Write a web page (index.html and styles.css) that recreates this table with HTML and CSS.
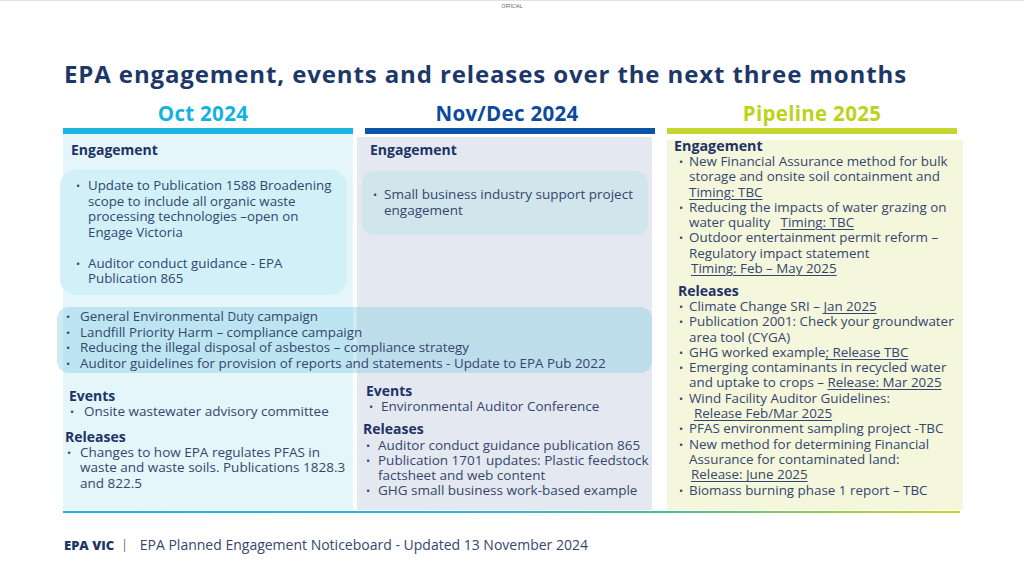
FILE: index.html
```html
<!DOCTYPE html>
<html lang="en">
<head>
<meta charset="utf-8">
<title>EPA Planned Engagement Noticeboard</title>
<link rel="stylesheet" href="styles.css">
</head>
<body>
<div class="slide">
  <div class="official">OFFICIAL</div>
  <h1 class="title">EPA engagement, events and releases over the next three months</h1>

  <div class="heads">
    <div class="head oct">Oct 2024</div>
    <div class="head nov">Nov/Dec 2024</div>
    <div class="head pipe">Pipeline 2025</div>
  </div>

  <div class="board">
    <div class="bg bg1"></div>
    <div class="bg bg2"></div>
    <div class="bg bg3"></div>

    <div class="c1-top">
      <h3 class="sec c1-eng">Engagement</h3>
      <ul class="list box1">
        <li>Update to Publication 1588 Broadening scope to include all organic waste processing technologies –open on Engage Victoria</li>
        <li class="spaced">Auditor conduct guidance - EPA Publication 865</li>
      </ul>
    </div>

    <ul class="list overlay">
      <li>General Environmental <span class="small">Duty</span> campaign</li>
      <li>Landfill Priority Harm – compliance campaign</li>
      <li>Reducing the illegal disposal of asbestos – compliance strategy</li>
      <li>Auditor guidelines for provision of reports and statements - Update to EPA Pub 2022</li>
    </ul>

    <div class="c1-bot">
      <h3 class="sec c1-ev">Events</h3>
      <ul class="list c1-evlist">
        <li>Onsite wastewater advisory committee</li>
      </ul>
      <h3 class="sec c1-rel">Releases</h3>
      <ul class="list c1-rellist">
        <li>Changes to how EPA regulates PFAS in waste and waste soils. Publications 1828.3 and 822.5</li>
      </ul>
    </div>

    <div class="c2-top">
      <h3 class="sec c2-eng">Engagement</h3>
      <ul class="list box2">
        <li>Small business industry support project engagement</li>
      </ul>
    </div>

    <div class="c2-bot">
      <h3 class="sec c2-ev">Events</h3>
      <ul class="list c2-evlist">
        <li>Environmental Auditor Conference</li>
      </ul>
      <h3 class="sec c2-rel">Releases</h3>
      <ul class="list c2-rellist">
        <li>Auditor conduct guidance publication 865</li>
        <li>Publication 1701 updates: Plastic feedstock factsheet and web content</li>
        <li>GHG small business work-based example</li>
      </ul>
    </div>

    <div class="c3">
      <h3 class="sec c3-eng">Engagement</h3>
      <ul class="list c3-list">
        <li>New Financial Assurance method for bulk storage and onsite soil containment and <u>Timing: TBC</u></li>
        <li>Reducing the impacts of water grazing on water quality &nbsp;&nbsp;<u>Timing: TBC</u></li>
        <li>Outdoor entertainment permit reform – Regulatory impact statement<br><u class="ind">Timing: Feb – May 2025</u></li>
      </ul>
      <h3 class="sec c3-rel">Releases</h3>
      <ul class="list c3-list">
        <li>Climate Change SRI – <u>Jan 2025</u></li>
        <li>Publication 2001: Check your groundwater area tool (CYGA)</li>
        <li>GHG worked example<u>; Release TBC</u></li>
        <li>Emerging contaminants in recycled water and uptake to crops – <u>Release: Mar 2025</u></li>
        <li>Wind Facility Auditor Guidelines:<br><u class="ind2">Release Feb/Mar 2025</u></li>
        <li>PFAS environment sampling project -TBC</li>
        <li>New method for determining Financial Assurance for contaminated land:<br><u class="ind">Release: June 2025</u></li>
        <li>Biomass burning phase 1 report – TBC</li>
      </ul>
    </div>
  </div>

  <div class="rule"></div>

  <div class="footer">
    <span class="brand">EPA VIC</span>
    <span class="pipe-sep">|</span>
    <span class="foot-text">EPA Planned Engagement Noticeboard - Updated 13 November 2024</span>
  </div>
</div>
</body>
</html>
```

FILE: styles.css
```css
* { box-sizing: border-box; }

body {
  margin: 0;
  font-family: "Open Sans", "DejaVu Sans", sans-serif;
  color: #34466e;
  background: #ffffff;
}

.slide {
  width: 1024px;
  height: 576px;
  border-top: 1px solid #e2e2e2;
  overflow: hidden;
}

.official {
  font-size: 5px;
  line-height: 6px;
  padding-top: 2px;
  text-align: center;
  color: #555;
}

.title {
  margin: 50px 0 0 64px;
  font-size: 24px;
  line-height: 30px;
  font-weight: 700;
  color: #1d3769;
  letter-spacing: 0.88px;
  white-space: nowrap;
}

.heads {
  display: grid;
  grid-template-columns: repeat(3, 290px);
  column-gap: 12px;
  margin: 12px 0 0 63px;
}

.head {
  text-align: center;
  font-size: 20.5px;
  line-height: 24px;
  font-weight: 700;
  letter-spacing: 0.3px;
}
.head::after {
  content: "";
  display: block;
  height: 6px;
  margin-top: 3px;
}
.oct { color: #12b3e2; text-indent: -10px; }
.oct::after { background: #1cb4e0; }
.nov { color: #0d4a9c; text-indent: -6px; }
.nov::after { background: #0b55a6; }
.pipe { color: #bcd31a; }
.pipe::after { background: #c6d82f; }

.board {
  display: grid;
  margin-left: 63px;
  grid-template-columns: 290px 4px 295px 15px 296px;
  grid-template-rows: 171px 70px 135px;
}

.bg { grid-row: 1 / -1; }
.bg1 { grid-column: 1; background: #e5f6fb; }
.bg2 { grid-column: 3; background: #e4e9f1; margin-top: 3px; }
.bg3 { grid-column: 5; background: #f5f7dc; margin-top: 6px; }

.sec {
  margin: 0;
  font-size: 14px;
  line-height: 16px;
  font-weight: 700;
  color: #1d3266;
}

.list {
  --ind: 12px;
  list-style: none;
  margin: 0;
  padding: 0;
  font-size: 13.5px;
  line-height: 15.5px;
}
.list li {
  padding-left: var(--ind);
  text-indent: calc(-1 * var(--ind));
}
.list li::before {
  content: "•";
  display: inline-block;
  width: var(--ind);
  text-indent: 0;
  font-size: 11px;
}

/* column 1 */
.c1-top { grid-column: 1; grid-row: 1; padding-top: 8px; }
.c1-eng { margin-left: 8px; }
.box1 {
  margin: 12px 6px 0 -3px;
  height: 125px;
  padding: 8px 10px 0 16px;
  background: #d1f0f8;
  border-radius: 16px;
  font-size: 13.3px;
}
.box1 li.spaced { margin-top: 15.5px; }

.overlay {
  --ind: 14px;
  grid-column: 1 / 4;
  grid-row: 2;
  z-index: 1;
  margin: 2px 0 0 -6px;
  height: 66px;
  padding: 2px 8px 0 9px;
  background: rgba(120, 200, 225, 0.36);
  border-radius: 12px;
  font-size: 13.4px;
}
.small { font-size: 12px; }

.c1-bot { grid-column: 1; grid-row: 3; padding-top: 13px; }
.c1-ev { margin-left: 6px; }
.c1-evlist { --ind: 14px; padding-left: 7px; }
.c1-rel { margin: 9px 0 0 2px; }
.c1-rellist { --ind: 13px; padding-left: 4px; padding-right: 6px; }

/* column 2 */
.c2-top { grid-column: 3; grid-row: 1; padding-top: 8px; }
.c2-eng { margin-left: 13px; }
.box2 {
  --ind: 11px;
  margin: 13px 4px 0 5px;
  height: 64px;
  padding: 16px 6px 0 11px;
  background: #d0e5ec;
  border-radius: 12px;
}

.c2-bot { grid-column: 3; grid-row: 3; padding-top: 8px; }
.c2-ev { margin-left: 9px; }
.c2-evlist { padding-left: 12px; }
.c2-rel { margin: 6px 0 0 6px; }
.c2-rellist { padding-left: 9px; line-height: 15px; margin-top: 1.5px; }

/* column 3 */
.c3 {
  grid-column: 5;
  grid-row: 1 / -1;
  padding-top: 4px;
  padding-left: 7px;
}
.c3-eng { font-size: 14.3px; }
.c3-list {
  --ind: 10px;
  font-size: 13.4px;
  line-height: 15.3px;
  padding-left: 5px;
}
.c3-rel { margin: 6.6px 0 0 4px; font-size: 14px; }

u {
  text-decoration: underline;
  text-decoration-thickness: 1px;
  text-underline-offset: 2px;
}
u.ind { margin-left: 2px; }
u.ind2 { margin-left: 5px; }

.rule {
  margin: 1px 0 0 63px;
  width: 897px;
  height: 2px;
  background: linear-gradient(90deg, #1cb4e0 0%, #2db6d6 45%, #4fb99a 68%, #8cc85a 82%, #c8d92a 100%);
}

.footer {
  margin: 23px 0 0 64px;
  display: flex;
  align-items: center;
  line-height: 18px;
}
.brand {
  font-size: 13px;
  font-weight: 800;
  color: #1d3769;
}
.pipe-sep {
  margin: 0 0 0 7px;
  font-size: 12px;
  color: #666;
}
.foot-text {
  margin-left: 12px;
  font-size: 14px;
  color: #34466e;
}
```
